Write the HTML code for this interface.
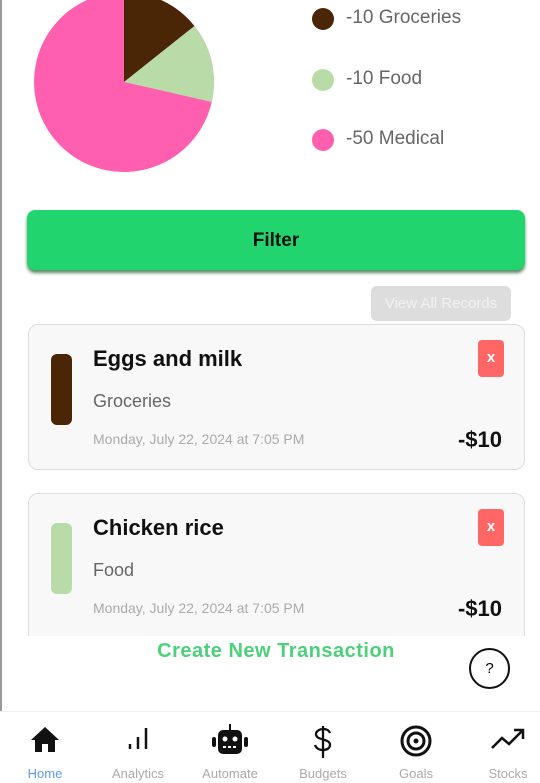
<!DOCTYPE html>
<html><head><meta charset="utf-8"><style>
*{margin:0;padding:0;box-sizing:border-box}
body{width:540px;height:783px;overflow:hidden;background:#fff;font-family:"Liberation Sans",sans-serif;position:relative}
.a{position:absolute}
.leg{position:absolute;left:312px;font-size:19px;color:#666}
.dot{position:absolute;left:312px;width:22px;height:22px;border-radius:50%}
.card{position:absolute;left:28px;width:497px;background:#f8f8f8;border:1.5px solid #ddd;border-radius:10px;overflow:hidden}
.bar{position:absolute;left:22px;top:29px;width:21px;height:71px;border-radius:6px}
.t{position:absolute;left:64px;top:21px;font-size:22px;font-weight:bold;color:#111}
.c{position:absolute;left:64px;top:66px;font-size:18px;color:#666}
.d{position:absolute;left:64px;top:106px;font-size:14px;color:#aaa}
.m{position:absolute;right:22px;top:102px;font-size:22px;font-weight:bold;color:#111}
.x{position:absolute;left:449px;top:15px;width:26px;height:37px;background:#f66;border-radius:4px;color:#fff;font-size:15px;font-weight:bold;text-align:center;line-height:36px}
.nav{position:absolute;top:711px;left:0;width:540px;height:72px;border-top:1px solid #eee}
.it{position:absolute;top:0;width:80px;text-align:center}
.it svg{position:absolute;left:50%;top:12px;transform:translateX(-50%)}
.it span{position:absolute;top:54px;left:0;width:80px;font-size:13px;color:#aaa;text-align:center}
</style></head><body>
<div class="a" style="left:0;top:0;width:2px;height:711px;background:#999"></div>
<svg class="a" style="left:0;top:0" width="260" height="200">
<circle cx="124" cy="82" r="90" fill="#ff5fae"/>
<path d="M124 82 L124 -8 A90 90 0 0 1 194.4 26 Z" fill="#4a2506"/>
<path d="M124 82 L194.4 26 A90 90 0 0 1 211.7 102 Z" fill="#b8dba8"/>
</svg>
<div class="dot" style="top:8px;background:#4a2506"></div><div class="leg" style="left:346px;top:7px">-10 Groceries</div>
<div class="dot" style="top:69px;background:#b8dba8"></div><div class="leg" style="left:346px;top:68px">-10 Food</div>
<div class="dot" style="top:129px;background:#ff5fae"></div><div class="leg" style="left:346px;top:128px">-50 Medical</div>
<div class="a" style="left:27px;top:210px;width:498px;height:60px;background:#22d46e;border-radius:8px;box-shadow:0 3px 3px #5a8a66;text-align:center;line-height:62px;font-size:19px;font-weight:bold;color:#111">Filter</div>
<div class="a" style="left:371px;top:286px;width:140px;height:35px;background:#ddd;border-radius:6px;color:#f2f2f2;font-size:15px;text-align:center;line-height:35px">View All Records</div>
<div class="card" style="top:324px;height:146px">
<div class="bar" style="background:#4a2506"></div>
<div class="t">Eggs and milk</div><div class="c">Groceries</div>
<div class="d">Monday, July 22, 2024 at 7:05 PM</div><div class="m">-$10</div><div class="x">x</div></div>
<div class="card" style="top:493px;height:143px;border-bottom:none;border-radius:10px 10px 0 0">
<div class="bar" style="background:#b8dba8"></div>
<div class="t">Chicken rice</div><div class="c">Food</div>
<div class="d">Monday, July 22, 2024 at 7:05 PM</div><div class="m">-$10</div><div class="x">x</div></div>
<div class="a" style="left:0;top:640px;width:540px;text-align:center;padding-left:12px;font-size:20px;font-weight:bold;color:#4cd07a;letter-spacing:0.5px">Create New Transaction</div>
<div class="a" style="left:469px;top:648px;width:41px;height:41px;border:2px solid #111;border-radius:50%;text-align:center;line-height:37px;font-size:15px">?</div>
<div class="nav">
<div class="it" style="left:5px"><svg width="32" height="30" viewBox="0 0 32 30"><path d="M16 3 L2 16 H6 V28 H13 V20 H19 V28 H26 V16 H30 Z" fill="#111"/></svg><span style="color:#5b9cf0">Home</span></div>
<div class="it" style="left:98px"><svg width="30" height="30" viewBox="0 0 30 30"><path d="M7 20v5M15 13v12M23 4v21" stroke="#111" stroke-width="2.5"/></svg><span>Analytics</span></div>
<div class="it" style="left:190px"><svg width="44" height="34" viewBox="0 0 44 34"><rect x="10" y="6" width="24" height="24" rx="5" fill="#111"/><rect x="21" y="0" width="2" height="7" fill="#111"/><rect x="4" y="13" width="4" height="10" rx="2" fill="#111"/><rect x="36" y="13" width="4" height="10" rx="2" fill="#111"/><circle cx="17" cy="15" r="2.5" fill="#fff"/><circle cx="27" cy="15" r="2.5" fill="#fff"/><path d="M15 23h14" stroke="#fff" stroke-width="2" stroke-dasharray="3 2"/></svg><span>Automate</span></div>
<div class="it" style="left:283px"><svg width="30" height="36" viewBox="0 0 30 36"><path d="M15 2v32M22 9c-1-3-4-4-7-4s-7 2-7 5c0 7 14 4 14 11 0 3-3 5-7 5s-7-2-8-5" stroke="#111" stroke-width="2.3" fill="none"/></svg><span>Budgets</span></div>
<div class="it" style="left:376px"><svg width="34" height="34" viewBox="0 0 34 34"><circle cx="17" cy="17" r="14" stroke="#111" stroke-width="3" fill="none"/><circle cx="17" cy="17" r="8" stroke="#111" stroke-width="3" fill="none"/><circle cx="17" cy="17" r="2.5" fill="#111"/></svg><span>Goals</span></div>
<div class="it" style="left:468px"><svg width="36" height="30" viewBox="0 0 36 30"><path d="M2 24 L12 14 L19 20 L32 7 M24 6h9v9" stroke="#111" stroke-width="2.5" fill="none"/></svg><span>Stocks</span></div>
</div>
</body></html>
